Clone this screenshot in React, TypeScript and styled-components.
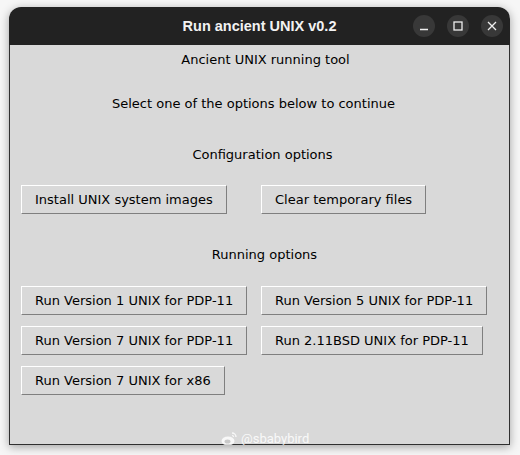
import React from 'react';
import styled, { createGlobalStyle } from 'styled-components';

const GlobalStyle = createGlobalStyle`
  html, body {
    margin: 0;
    padding: 0;
    background: #f6f6f6;
  }
  body {
    width: 520px;
    height: 455px;
    overflow: hidden;
  }
`;

const StyledWindow = styled.div`
  margin: 7px 0 0 9px;
  width: 501px;
  height: 438px;
  display: flex;
  flex-direction: column;
  border-radius: 12px 12px 0 0;
  box-shadow: 0 2px 10px rgba(0, 0, 0, 0.35);
  overflow: hidden;
  position: relative;
`;

const StyledTitleBar = styled.div`
  height: 38px;
  background: #222222;
  display: flex;
  align-items: center;
  justify-content: center;
  position: relative;
  color: #f2f2f2;
  font-family: 'Liberation Sans', Arial, sans-serif;
  font-weight: bold;
  font-size: 14.5px;
`;

const StyledControls = styled.div`
  position: absolute;
  right: 7px;
  top: 8px;
  display: flex;
  gap: 12px;
`;

const StyledCircle = styled.div`
  width: 22px;
  height: 22px;
  border-radius: 50%;
  background: #383838;
  display: flex;
  align-items: center;
  justify-content: center;
`;

const StyledBody = styled.div`
  flex: 1;
  background: #d9d9d9;
  border: 1px solid #303030;
  border-top: none;
  display: flex;
  flex-direction: column;
  align-items: center;
  font-family: 'DejaVu Sans', sans-serif;
  font-size: 13px;
  color: #000;
  position: relative;
`;

// $shift moves the centred label sideways, as the Tk grid cells do
const StyledLabel = styled.div<{ $top: number; $shift?: number }>`
  margin-top: ${(p) => p.$top}px;
  margin-left: ${(p) => Math.max(0, (p.$shift || 0) * 2)}px;
  margin-right: ${(p) => Math.max(0, -(p.$shift || 0) * 2)}px;
  line-height: 15px;
  height: 15px;
`;

const StyledGrid = styled.div<{ $top: number }>`
  align-self: stretch;
  margin: ${(p) => p.$top}px 0 0 11px;
  display: grid;
  grid-template-columns: 240px auto;
  row-gap: 11px;
`;

const StyledButton = styled.button`
  justify-self: start;
  height: 29px;
  padding: 0 13px;
  background: #d9d9d9;
  border: 1px solid;
  border-color: #ffffff #7f7f7f #7f7f7f #ffffff;
  font-family: 'DejaVu Sans', sans-serif;
  font-size: 13px;
  color: #000;
  line-height: 27px;
  white-space: nowrap;
`;

const StyledMark = styled.div`
  position: absolute;
  left: 211px;
  bottom: -2px;
  display: flex;
  align-items: center;
  gap: 3px;
  color: rgba(255, 255, 255, 0.85);
  font-family: 'Roboto', sans-serif;
  font-size: 13px;
`;

const WeiboIcon = () => (
  <svg width="17" height="15" viewBox="0 0 17 15">
    <ellipse cx="7" cy="10" rx="6.5" ry="4.5" fill="rgba(255,255,255,0.8)" />
    <ellipse cx="6.5" cy="10.5" rx="3" ry="2" fill="#c9c9c9" />
    <path d="M11 2 a4 4 0 0 1 4 4" stroke="rgba(255,255,255,0.8)" strokeWidth="1.4" fill="none" />
    <path d="M11 4.5 a1.6 1.6 0 0 1 1.6 1.6" stroke="rgba(255,255,255,0.8)" strokeWidth="1.2" fill="none" />
  </svg>
);

export default function App() {
  return (
    <>
      <GlobalStyle />
      <StyledWindow>
        <StyledTitleBar>
          Run ancient UNIX v0.2
          <StyledControls>
            <StyledCircle>
              <svg width="10" height="10" viewBox="0 0 10 10">
                <path d="M1 8.5h8" stroke="#eee" strokeWidth="1.3" />
              </svg>
            </StyledCircle>
            <StyledCircle>
              <svg width="10" height="10" viewBox="0 0 10 10">
                <rect x="1" y="1" width="8" height="8" stroke="#eee" strokeWidth="1.3" fill="none" />
              </svg>
            </StyledCircle>
            <StyledCircle>
              <svg width="10" height="10" viewBox="0 0 10 10">
                <path d="M1 1l8 8M9 1l-8 8" stroke="#eee" strokeWidth="1.3" />
              </svg>
            </StyledCircle>
          </StyledControls>
        </StyledTitleBar>
        <StyledBody>
          <StyledLabel $top={7} $shift={6}>Ancient UNIX running tool</StyledLabel>
          <StyledLabel $top={29} $shift={-6}>Select one of the options below to continue</StyledLabel>
          <StyledLabel $top={36} $shift={3}>Configuration options</StyledLabel>
          <StyledGrid $top={23}>
            <StyledButton>Install UNIX system images</StyledButton>
            <StyledButton>Clear temporary files</StyledButton>
          </StyledGrid>
          <StyledLabel $top={33} $shift={5}>Running options</StyledLabel>
          <StyledGrid $top={24}>
            <StyledButton>Run Version 1 UNIX for PDP-11</StyledButton>
            <StyledButton>Run Version 5 UNIX for PDP-11</StyledButton>
            <StyledButton>Run Version 7 UNIX for PDP-11</StyledButton>
            <StyledButton>Run 2.11BSD UNIX for PDP-11</StyledButton>
            <StyledButton>Run Version 7 UNIX for x86</StyledButton>
          </StyledGrid>
          <StyledMark>
            <WeiboIcon />
            @sbabybird
          </StyledMark>
        </StyledBody>
      </StyledWindow>
    </>
  );
}
